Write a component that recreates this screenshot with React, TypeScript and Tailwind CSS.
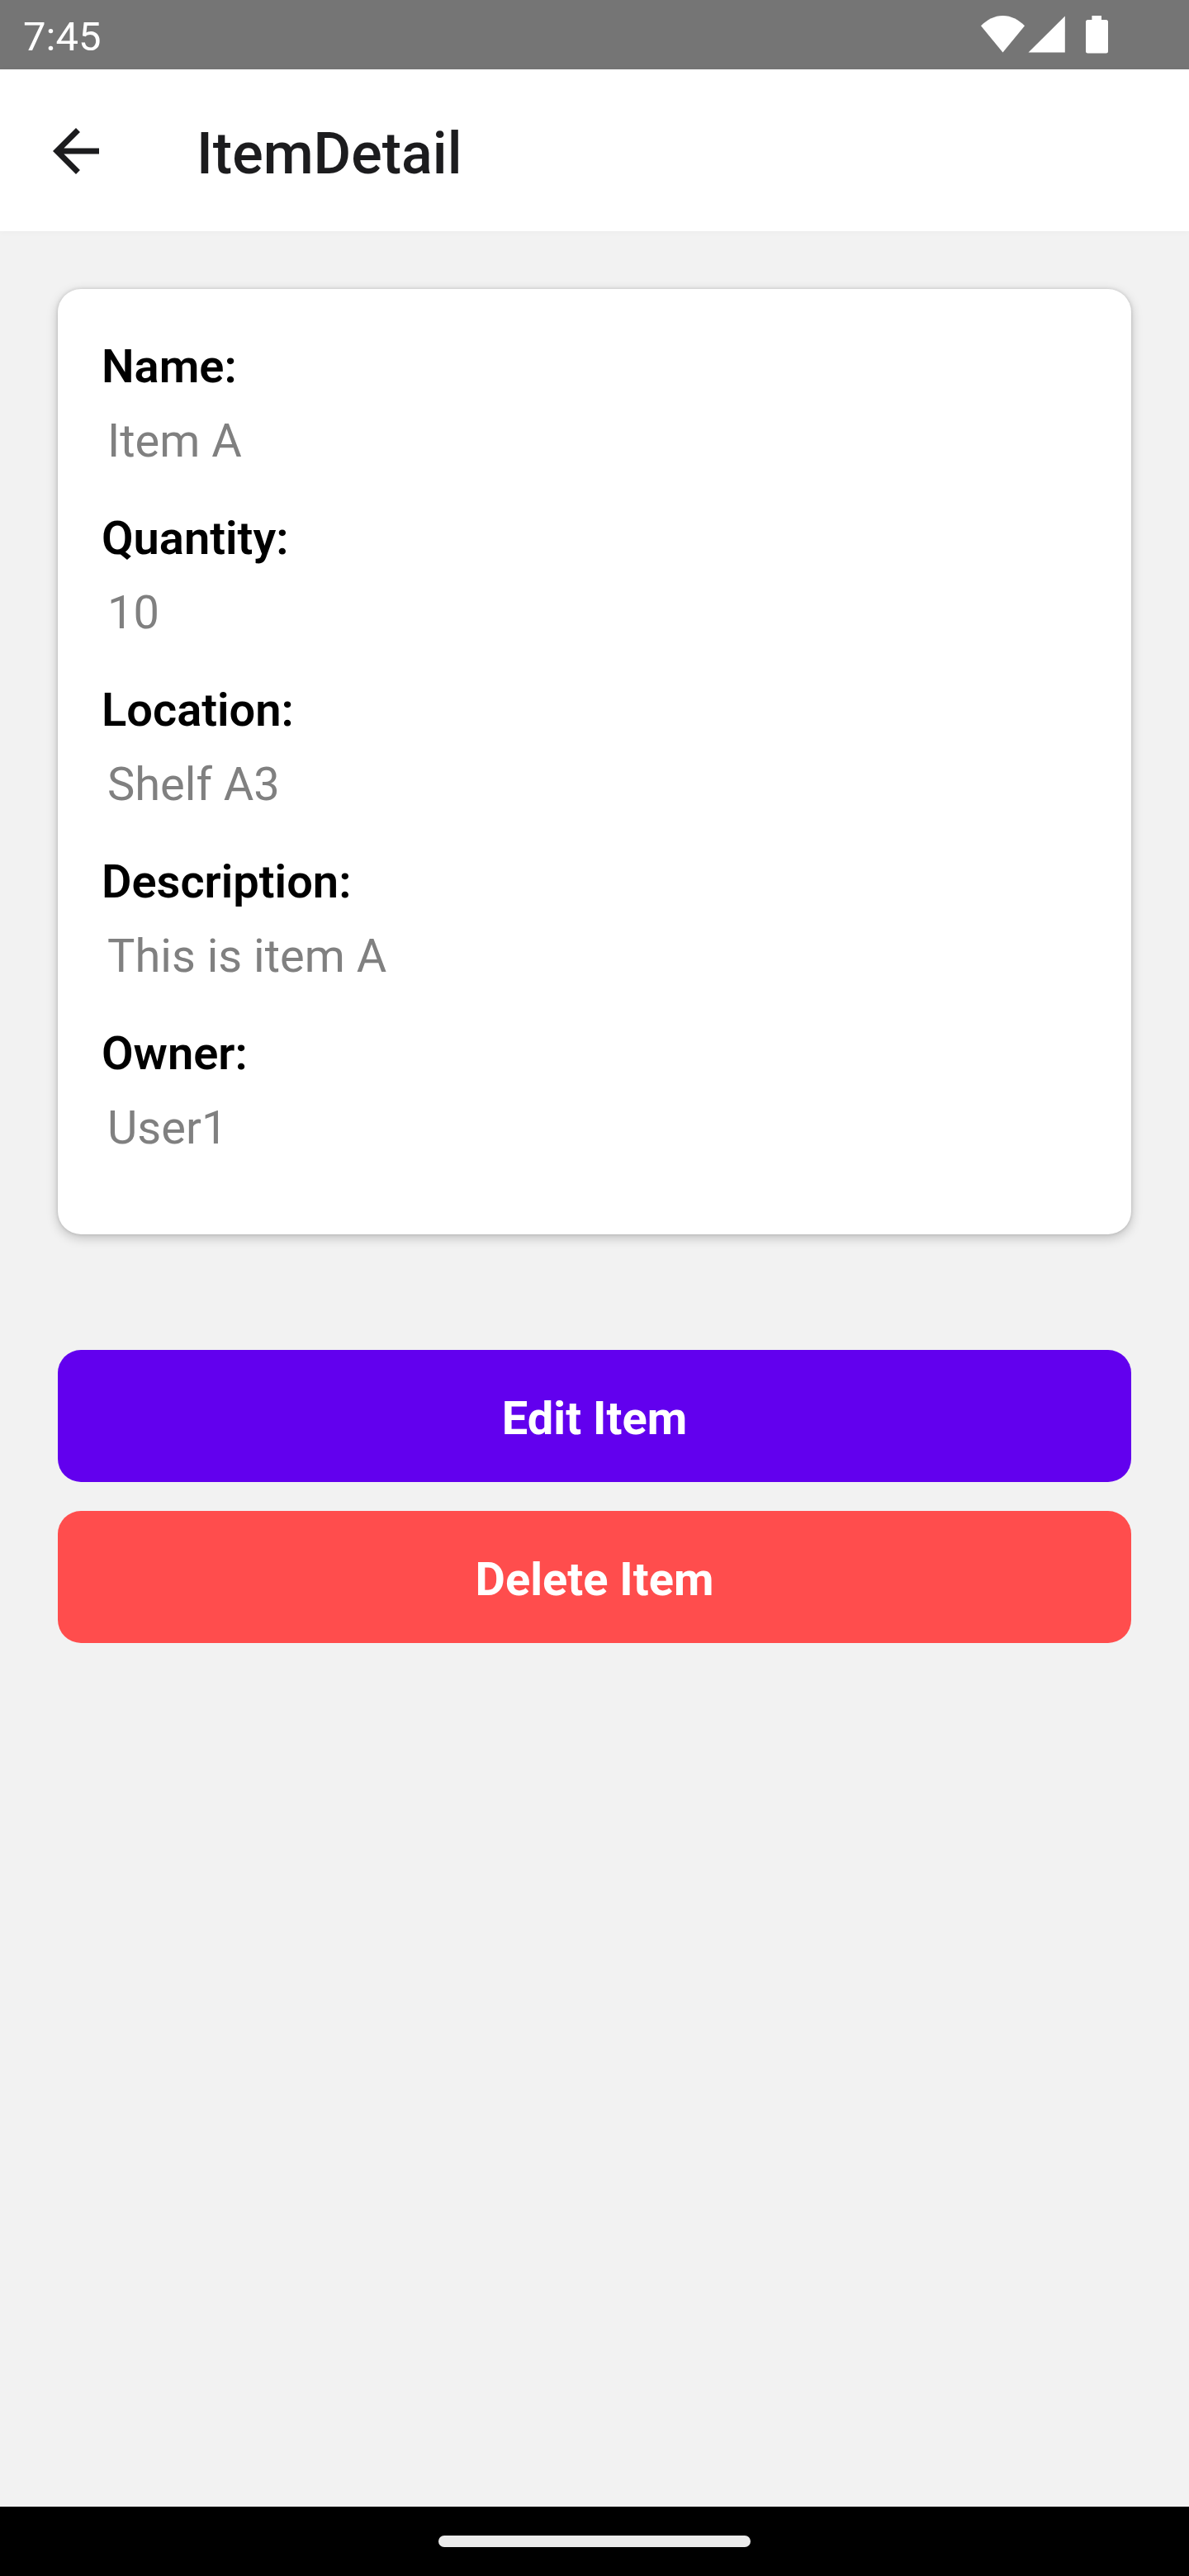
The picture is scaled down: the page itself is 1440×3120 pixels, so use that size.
const fields = [
  { label: 'Name:', value: 'Item A' },
  { label: 'Quantity:', value: '10' },
  { label: 'Location:', value: 'Shelf A3' },
  { label: 'Description:', value: 'This is item A' },
  { label: 'Owner:', value: 'User1' },
];

function StatusBar() {
  return (
    <div className="flex h-[84px] shrink-0 items-center justify-between bg-[#757575] pl-7 text-white">
      <span className="pt-[5px] text-[49px] leading-[58px]">7:45</span>
      <svg className="h-[84px] w-[280px]" viewBox="0 0 280 84" fill="currentColor">
        <path d="M28 31.3C35.6 23.7 44.5 19 54.5 19C64.500 19 73.400 23.700 81 31.300L54.500 63.500Z" />
        <path d="M129.800 19.500V63.500H85.500Z" />
        <path d="M162.400 19H174V24H179.500Q182 24 182 26.500V62Q182 64.500 179.500 64.500H157.500Q155 64.500 155 62V26.500Q155 24 157.500 24H162.400Z" />
      </svg>
    </div>
  );
}

function Header() {
  return (
    <header className="flex h-[196px] shrink-0 items-center bg-white pl-[50px] text-[#1c1c1e] shadow-[0_1px_8px_rgba(0,0,0,0.03)]">
      <button aria-label="Back" className="mt-[2px] block">
        <svg className="size-[84px]" viewBox="0 0 24 24" fill="currentColor">
          <path d="M20 11H7.830l5.590-5.590L12 4l-8 8 8 8 1.410-1.410L7.830 13H20v-2z" />
        </svg>
      </button>
      <h1 className="ml-[104px] pt-2 text-[70px] font-medium leading-[82px]">ItemDetail</h1>
    </header>
  );
}

export default function App() {
  return (
    <div className="flex h-[3120px] w-[1440px] flex-col overflow-hidden bg-[#f2f2f2] font-['Roboto',sans-serif]">
      <StatusBar />
      <Header />
      <main className="flex grow flex-col px-[70px] pt-[70px]">
        <section className="h-[1145px] rounded-[28px] bg-white px-[53px] pt-[61px] shadow-[0_4px_14px_rgba(0,0,0,0.22),0_0_4px_rgba(0,0,0,0.14)]">
          {fields.map((field) => (
            <div key={field.label} className="h-[208px]">
              <div className="text-[56px] font-semibold leading-[66px] text-black">{field.label}</div>
              <div className="mt-6 pl-[7px] text-[56px] leading-[66px] text-[#808080]">{field.value}</div>
            </div>
          ))}
        </section>
        <div className="mt-[140px] flex flex-col gap-[35px] text-[56px] font-bold leading-[66px] text-white">
          <button className="h-40 rounded-[28px] bg-[#6200ee] pt-1.5">Edit Item</button>
          <button className="h-40 rounded-[28px] bg-[#ff4d4d] pt-1.5">Delete Item</button>
        </div>
      </main>
      <div className="flex h-[84px] shrink-0 items-center justify-center bg-black">
        <div className="h-[14px] w-[378px] rounded-full bg-[#ebebeb]" />
      </div>
    </div>
  );
}
